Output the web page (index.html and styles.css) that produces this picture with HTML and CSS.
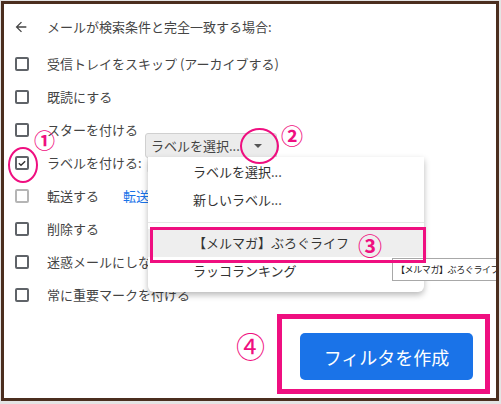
FILE: index.html
```html
<!doctype html>
<html lang="ja">
<head>
    <meta charset="utf-8">
    <title>フィルタを作成</title>
    <link rel="stylesheet" href="styles.css">
</head>
<body>

<div class="frame">
    <div class="header">
        <svg class="back-icon" viewBox="0 0 24 24">
            <path d="M20 11H7.83l5.59-5.59L12 4l-8 8 8 8 1.41-1.41L7.83 13H20v-2z"></path>
        </svg>
        <span>メールが検索条件と完全一致する場合:</span>
    </div>

    <div class="options">
        <div class="row"><span class="check"></span><span>受信トレイをスキップ (アーカイブする)</span></div>
        <div class="row"><span class="check"></span><span>既読にする</span></div>
        <div class="row"><span class="check"></span><span>スターを付ける</span></div>
        <div class="row">
            <span class="check checked">
                <svg viewBox="0 0 12 12"><path d="M2.2 6.2l2.6 2.6 5-5"></path></svg>
            </span>
            <span>ラベルを付ける:</span>
            <span class="select-under"></span>
        </div>
        <div class="row"><span class="check disabled"></span><span>転送する</span><a class="link">転送先</a></div>
        <div class="row"><span class="check"></span><span>削除する</span></div>
        <div class="row"><span class="check"></span><span>迷惑メールにしない</span></div>
        <div class="row"><span class="check"></span><span>常に重要マークを付ける</span></div>
    </div>

    <div class="footer">
        <button class="create-button">フィルタを作成</button>
    </div>

    <!-- open label select -->
    <div class="select-open">
        <span>ラベルを選択...</span>
        <span class="caret"></span>
    </div>
    <div class="menu">
        <div class="menu-item">ラベルを選択...</div>
        <div class="menu-item">新しいラベル...</div>
        <div class="menu-divider"></div>
        <div class="menu-item active">【メルマガ】ぶろぐライフ</div>
        <div class="menu-item">ラッコランキング</div>
    </div>
    <div class="tooltip">【メルマガ】ぶろぐライフ</div>

    <!-- annotations -->
    <div class="mark ring ring-check"></div>
    <div class="mark ring ring-caret"></div>
    <div class="mark box box-item"></div>
    <div class="mark box box-button"></div>
    <div class="mark num num-1">①</div>
    <div class="mark num num-2">②</div>
    <div class="mark num num-3">③</div>
    <div class="mark num num-4">④</div>
</div>

</body>
</html>
```

FILE: styles.css
```css
body {
    margin: 0;
    padding: 1px 0 0 1px;
    background-color: #e4e4e4;
    font-family: "Noto Sans CJK JP", Roboto, sans-serif;
    font-size: 13px;
    color: #444;
}

.frame {
    position: relative;
    box-sizing: border-box;
    width: 498px;
    height: 400px;
    border: 3px solid #4b2e1f;
    background-color: #fff;
    padding: 6px 0 0 11px;
    overflow: hidden;
}

.header {
    display: flex;
    align-items: center;
    height: 33px;
    margin-bottom: 4px;
}

.back-icon {
    width: 16px;
    height: 16px;
    margin: 0 18px 0 -2px;
    fill: #444;
}

.row {
    display: flex;
    align-items: center;
    height: 33px;
}

.check {
    box-sizing: border-box;
    width: 14px;
    height: 14px;
    border: 2px solid #5f6368;
    border-radius: 2px;
    margin-right: 18px;
    flex-shrink: 0;
}

.check svg {
    display: block;
    width: 10px;
    height: 10px;
    fill: none;
    stroke: #333;
    stroke-width: 1.6;
}

.check.disabled {
    border-color: #b5b5b5;
}

.link {
    margin-left: 24px;
    color: #1a73e8;
    white-space: nowrap;
}

.select-under {
    width: 130px;
    height: 20px;
    margin-left: 5px;
    background-color: #ececec;
    border-radius: 3px;
}

.footer {
    display: flex;
    justify-content: flex-end;
    padding: 22px 23px 0 0;
}

.create-button {
    width: 173px;
    height: 47px;
    border: none;
    border-radius: 5px;
    background-color: #1a73e8;
    color: #fff;
    font-family: inherit;
    font-size: 18px;
}

.select-open {
    position: absolute;
    left: 141px;
    top: 129px;
    box-sizing: border-box;
    width: 132px;
    height: 25px;
    display: flex;
    align-items: center;
    justify-content: space-between;
    padding: 0 14px 0 5px;
    background-color: #ececec;
    border: 1px solid #d0d0d0;
    border-radius: 3px;
    color: #444;
}

.caret {
    width: 0;
    height: 0;
    border-left: 4px solid transparent;
    border-right: 4px solid transparent;
    border-top: 4px solid #555;
}

.menu {
    position: absolute;
    left: 144px;
    top: 153px;
    box-sizing: border-box;
    width: 276px;
    height: 135px;
    padding: 1px 0 7px;
    background-color: #fff;
    border-radius: 0 0 6px 6px;
    box-shadow: 0 3px 6px rgba(0, 0, 0, 0.28);
    color: #333;
}

.menu-item {
    height: 28px;
    line-height: 28px;
    padding-left: 45px;
}

.menu-item.active {
    background-color: #eeeeee;
}

.menu-divider {
    height: 1px;
    margin: 8px 0 6px;
    background-color: #e6e6e6;
}

.tooltip {
    position: absolute;
    left: 388px;
    top: 254px;
    box-sizing: border-box;
    width: 112px;
    height: 23px;
    line-height: 21px;
    padding-left: 3px;
    border: 1px solid #a8a8a8;
    background-color: #fff;
    color: #222;
    font-size: 9px;
    letter-spacing: -0.4px;
    white-space: nowrap;
}

.mark {
    position: absolute;
    color: #ef0f80;
}

.ring {
    box-sizing: border-box;
    border: 2px solid #ef0f80;
    border-radius: 50%;
}

.ring-check {
    left: 4px;
    top: 143px;
    width: 30px;
    height: 36px;
}

.ring-caret {
    left: 236px;
    top: 124px;
    width: 39px;
    height: 36px;
}

.box {
    box-sizing: border-box;
    border: 3px solid #ef0f80;
}

.box-item {
    left: 146px;
    top: 223px;
    width: 276px;
    height: 36px;
}

.box-button {
    left: 273px;
    top: 310px;
    width: 213px;
    height: 80px;
    border-width: 5px;
}

.num {
    line-height: 1;
    font-weight: bold;
}

.num-1 {
    left: 30px;
    top: 125px;
    font-size: 21px;
}

.num-2 {
    left: 277px;
    top: 119px;
    font-size: 22px;
}

.num-3 {
    left: 354px;
    top: 229px;
    font-size: 24px;
}

.num-4 {
    left: 232px;
    top: 327px;
    font-size: 29px;
    font-weight: normal;
}
```
